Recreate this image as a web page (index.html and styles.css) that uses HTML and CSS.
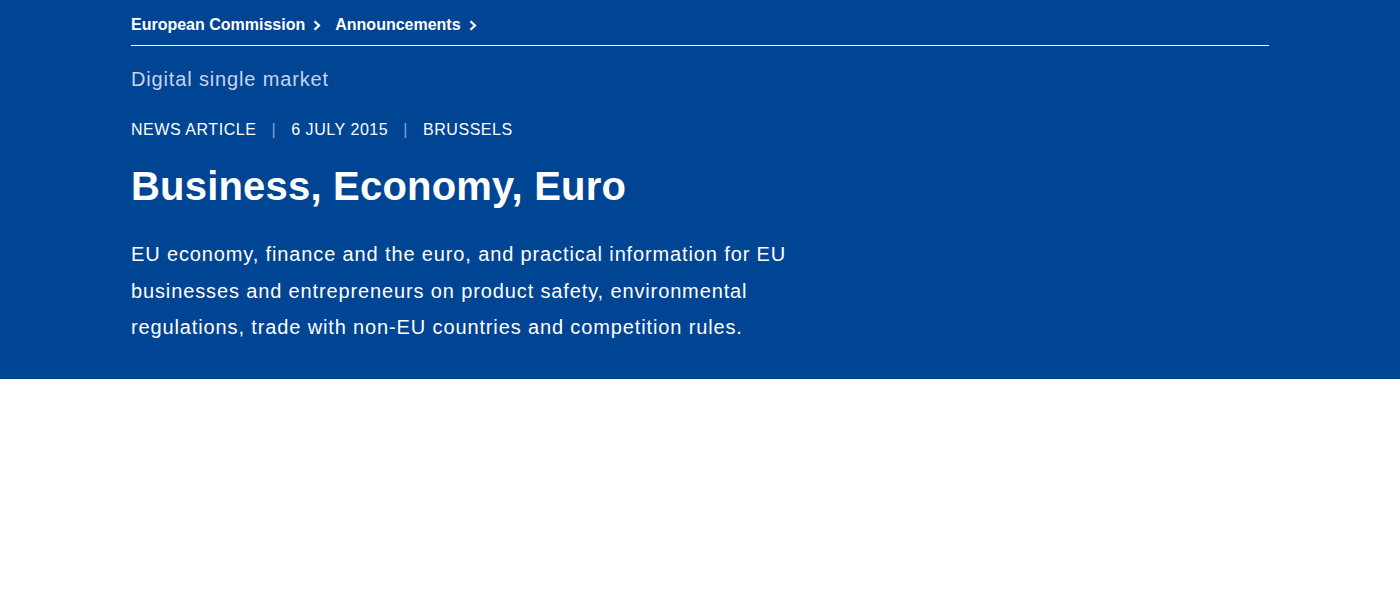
FILE: index.html
```html
<!DOCTYPE html>
<html lang="en">
<head>
<meta charset="utf-8">
<title>Business, Economy, Euro</title>
<link rel="stylesheet" href="styles.css">
</head>
<body>
<header class="hero">
  <div class="container">
    <nav class="breadcrumb">
      <a class="crumb" href="#">European Commission</a>
      <svg class="chev" width="8" height="11" viewBox="0 0 8 11"><polyline points="1.5,1.2 6,5.5 1.5,9.8" fill="none" stroke="#fff" stroke-width="2.2"/></svg>
      <a class="crumb" href="#">Announcements</a>
      <svg class="chev" width="8" height="11" viewBox="0 0 8 11"><polyline points="1.5,1.2 6,5.5 1.5,9.8" fill="none" stroke="#fff" stroke-width="2.2"/></svg>
    </nav>
    <div class="topic">Digital single market</div>
    <div class="meta">
      <span>News article</span><span class="sep">|</span><span>6 July 2015</span><span class="sep">|</span><span>Brussels</span>
    </div>
    <h1 class="title">Business, Economy, Euro</h1>
    <p class="desc">EU economy, finance and the euro, and practical information for EU businesses and entrepreneurs on product safety, environmental regulations, trade with non-EU countries and competition rules.</p>
  </div>
</header>
</body>
</html>
```
FILE: styles.css
```css
html, body {
  margin: 0;
  padding: 0;
  background: #fff;
  font-family: Arial, "Liberation Sans", sans-serif;
}
.hero {
  background: #004494;
  color: #fff;
  padding-bottom: 33px;
}
.container {
  margin: 0 131px;
}
.breadcrumb {
  display: flex;
  align-items: center;
  padding-top: 15px;
  padding-bottom: 10px;
  border-bottom: 1px solid #fff;
  font-size: 16px;
  line-height: 20px;
  font-weight: bold;
}
.crumb {
  color: #fff;
  text-decoration: none;
}
.chev {
  margin: 0 14px 0 8px;
  display: block;
}
.topic {
  margin-top: 21px;
  font-size: 20px;
  line-height: 24px;
  letter-spacing: 0.85px;
  color: #c6d5ec;
}
.meta {
  margin-top: 29px;
  font-size: 16px;
  line-height: 20px;
  letter-spacing: 0.55px;
  text-transform: uppercase;
  display: flex;
}
.sep {
  color: #8aa6cc;
  margin: 0 15px;
}
.title {
  margin: 22px 0 0;
  font-size: 40px;
  line-height: 48px;
  font-weight: bold;
  letter-spacing: 0.2px;
}
.desc {
  margin: 26px 0 0;
  font-size: 20px;
  line-height: 36.5px;
  letter-spacing: 0.87px;
  max-width: 700px;
}
```
